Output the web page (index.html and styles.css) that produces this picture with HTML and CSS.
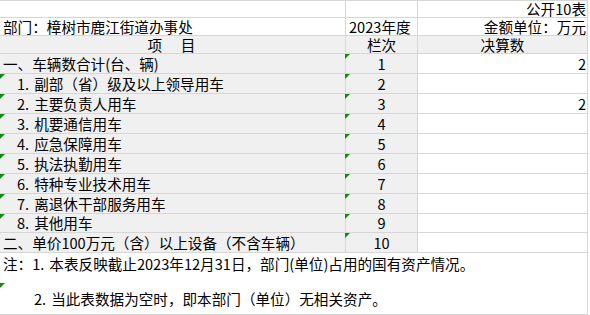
FILE: index.html
```html
<!DOCTYPE html>
<html lang="zh-CN">
<head>
<meta charset="utf-8">
<title>公开10表</title>
<link rel="stylesheet" href="styles.css">
</head>
<body>
<div class="sheet">
  <div class="c r-top"></div>
  <div class="c r-top"></div>
  <div class="c r-top right">公开10表</div>

  <div class="c r-info">部门：樟树市鹿江街道办事处</div>
  <div class="c r-info">2023年度</div>
  <div class="c r-info right">金额单位：万元</div>

  <div class="c r-head gray center"><span class="spaced">项　目</span></div>
  <div class="c r-head gray center">栏次</div>
  <div class="c r-head gray center">决算数</div>

  <div class="c r-data gray">一、车辆数合计(台、辆)</div>
  <div class="c r-data gray center mark mark-b">1</div>
  <div class="c r-data right">2</div>

  <div class="c r-data gray indent mark"><span>1<span class="dot">.</span>副部（省）级及以上领导用车</span></div>
  <div class="c r-data gray center mark mark-b">2</div>
  <div class="c r-data right"></div>

  <div class="c r-data gray indent mark"><span>2<span class="dot">.</span>主要负责人用车</span></div>
  <div class="c r-data gray center mark mark-b">3</div>
  <div class="c r-data right">2</div>

  <div class="c r-data gray indent mark"><span>3<span class="dot">.</span>机要通信用车</span></div>
  <div class="c r-data gray center mark mark-b">4</div>
  <div class="c r-data right"></div>

  <div class="c r-data gray indent mark"><span>4<span class="dot">.</span>应急保障用车</span></div>
  <div class="c r-data gray center mark mark-b">5</div>
  <div class="c r-data right"></div>

  <div class="c r-data gray indent mark"><span>5<span class="dot">.</span>执法执勤用车</span></div>
  <div class="c r-data gray center mark mark-b">6</div>
  <div class="c r-data right"></div>

  <div class="c r-data gray indent mark"><span>6<span class="dot">.</span>特种专业技术用车</span></div>
  <div class="c r-data gray center mark mark-b">7</div>
  <div class="c r-data right"></div>

  <div class="c r-data gray indent mark"><span>7<span class="dot">.</span>离退休干部服务用车</span></div>
  <div class="c r-data gray center mark mark-b">8</div>
  <div class="c r-data right"></div>

  <div class="c r-data gray indent mark"><span>8<span class="dot">.</span>其他用车</span></div>
  <div class="c r-data gray center mark mark-b">9</div>
  <div class="c r-data right"></div>

  <div class="c r-data gray">二、单价100万元（含）以上设备（不含车辆）</div>
  <div class="c r-data gray center mark mark-b">10</div>
  <div class="c r-data right"></div>

  <div class="c note note-1"><span>注：1<span class="dot">.</span>本表反映截止2023年12月31日，部门(单位)占用的国有资产情况。</span></div>
  <div class="c note note-2 mark"><span>2<span class="dot">.</span>当此表数据为空时，即本部门（单位）无相关资产。</span></div>
</div>
</body>
</html>
```
FILE: styles.css
```css
html, body {
  margin: 0;
  padding: 0;
  background: #ffffff;
}

body {
  font-family: "Noto Sans CJK SC", "Noto Sans", sans-serif;
  font-size: 14.6px;
  color: #000000;
}

.sheet {
  display: grid;
  grid-template-columns: 346px 72px 170px;
  grid-template-rows: 17px 18px 18px repeat(8, 20px) 19px 20px 30px 32px;
  width: 588px;
  border-top: 1px solid #d6d6d6;
}

.c {
  position: relative;
  box-sizing: border-box;
  display: flex;
  align-items: flex-end;
  justify-content: flex-start;
  border-right: 1px solid #d6d6d6;
  border-bottom: 1px solid #d6d6d6;
  line-height: 16px;
  padding: 0 1px 0 3px;
  white-space: nowrap;
  overflow: visible;
}

.gray {
  background: #f0f0f0;
}

.center {
  justify-content: center;
  padding-left: 1px;
}

.right {
  justify-content: flex-end;
}

.r-data {
  padding-bottom: 1px;
}

.indent {
  padding-left: 17px;
}

.dot {
  margin-right: 5px;
}

.spaced {
  letter-spacing: 2px;
}

.note {
  grid-column: 1 / 4;
  align-items: flex-start;
}

.note-1 {
  border-bottom: none;
  padding-top: 3px;
}

.note-2 {
  padding-top: 8px;
  padding-left: 34px;
}

.mark::before {
  content: "";
  position: absolute;
  top: 0;
  left: 0;
  width: 0;
  height: 0;
  border-top: 5px solid #128a12;
  border-right: 5px solid transparent;
}

.mark-b::before {
  left: -1px;
}
```
